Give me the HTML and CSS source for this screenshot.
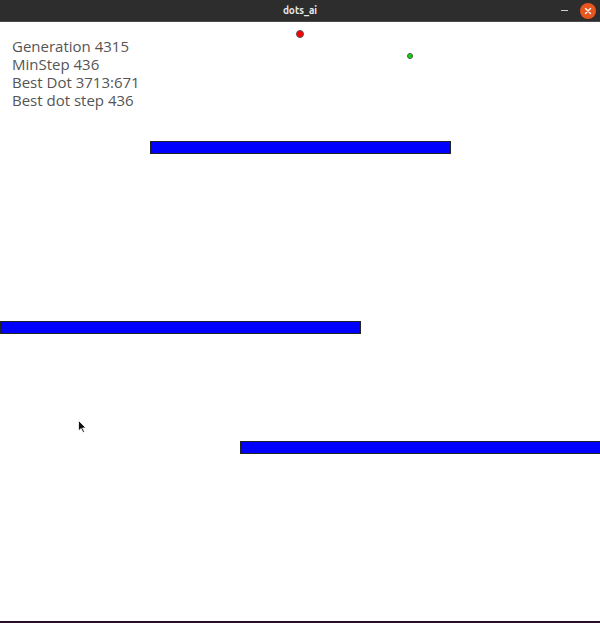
FILE: index.html
```html
<!DOCTYPE html>
<html>
<head>
<meta charset="utf-8">
<title>dots_ai</title>
<link rel="stylesheet" href="styles.css">
</head>
<body>
<div class="window">
  <div class="titlebar">
    <span class="title">dots_ai</span>
    <div class="controls">
      <span class="minimize"></span>
      <span class="close">
        <svg width="10" height="10" viewBox="0 0 10 10"><path d="M2.5 2.5 L7.5 7.5 M7.5 2.5 L2.5 7.5" stroke="#fff" stroke-width="1.4" stroke-linecap="round"/></svg>
      </span>
    </div>
  </div>
  <div class="canvas">
    <div class="stats">
      <div>Generation 4315</div>
      <div>MinStep 436</div>
      <div>Best Dot 3713:671</div>
      <div>Best dot step 436</div>
    </div>
    <span class="dot dot-red"></span>
    <span class="dot dot-green"></span>
    <div class="wall wall-1"></div>
    <div class="wall wall-2"></div>
    <div class="wall wall-3"></div>
    <svg class="cursor" width="9" height="14" viewBox="0 0 9 14"><path d="M0.5 0.5 L0.5 11 L3 8.5 L5 12.5 L6.5 11.8 L4.6 8 L8 8 Z" fill="#111" stroke="#fff" stroke-width="0.8"/></svg>
  </div>
  <div class="bottom-edge"></div>
</div>
</body>
</html>
```

FILE: styles.css
```css
* { box-sizing: border-box; }
html, body { margin: 0; padding: 0; background: #fff; }
.window {
  width: 600px;
  height: 623px;
  display: flex;
  flex-direction: column;
  overflow: hidden;
}
.titlebar {
  height: 22px;
  flex: none;
  background: #2d2d2d;
  border-bottom: 1px solid #4a4a4a;
  position: relative;
  display: flex;
  align-items: center;
  justify-content: center;
}
.title {
  font-family: "Ubuntu", "DejaVu Sans", sans-serif;
  font-weight: bold;
  font-size: 10px;
  color: #e8e8e8;
}
.controls {
  position: absolute;
  right: 4px;
  top: 0;
  height: 21px;
  display: flex;
  align-items: center;
  gap: 12px;
}
.minimize {
  width: 7px;
  height: 1px;
  background: #cfcfcf;
}
.close {
  width: 16px;
  height: 16px;
  border-radius: 50%;
  background: #e8551f;
  display: flex;
  align-items: center;
  justify-content: center;
}
.canvas {
  flex: 1;
  position: relative;
  background: #fff;
}
.stats {
  padding: 15px 0 0 12px;
  font-family: "Open Sans", "DejaVu Sans", sans-serif;
  font-size: 15px;
  line-height: 18px;
  color: #555;
}
.dot {
  position: absolute;
  border-radius: 50%;
  border: 1px solid #555;
}
.dot-red {
  left: 296px;
  top: 8px;
  width: 8px;
  height: 8px;
  background: #ff0000;
}
.dot-green {
  left: 407px;
  top: 31px;
  width: 6px;
  height: 6px;
  background: #00e000;
}
.wall {
  position: absolute;
  height: 13px;
  background: #0000ff;
  border: 1px solid #222;
}
.wall-1 { left: 150px; top: 119px; width: 301px; }
.wall-2 { left: 0; top: 299px; width: 361px; }
.wall-3 { left: 240px; top: 419px; width: 362px; }
.cursor {
  position: absolute;
  left: 78px;
  top: 398px;
}
.bottom-edge {
  height: 2px;
  flex: none;
  background: #2c0e2c;
}
```
